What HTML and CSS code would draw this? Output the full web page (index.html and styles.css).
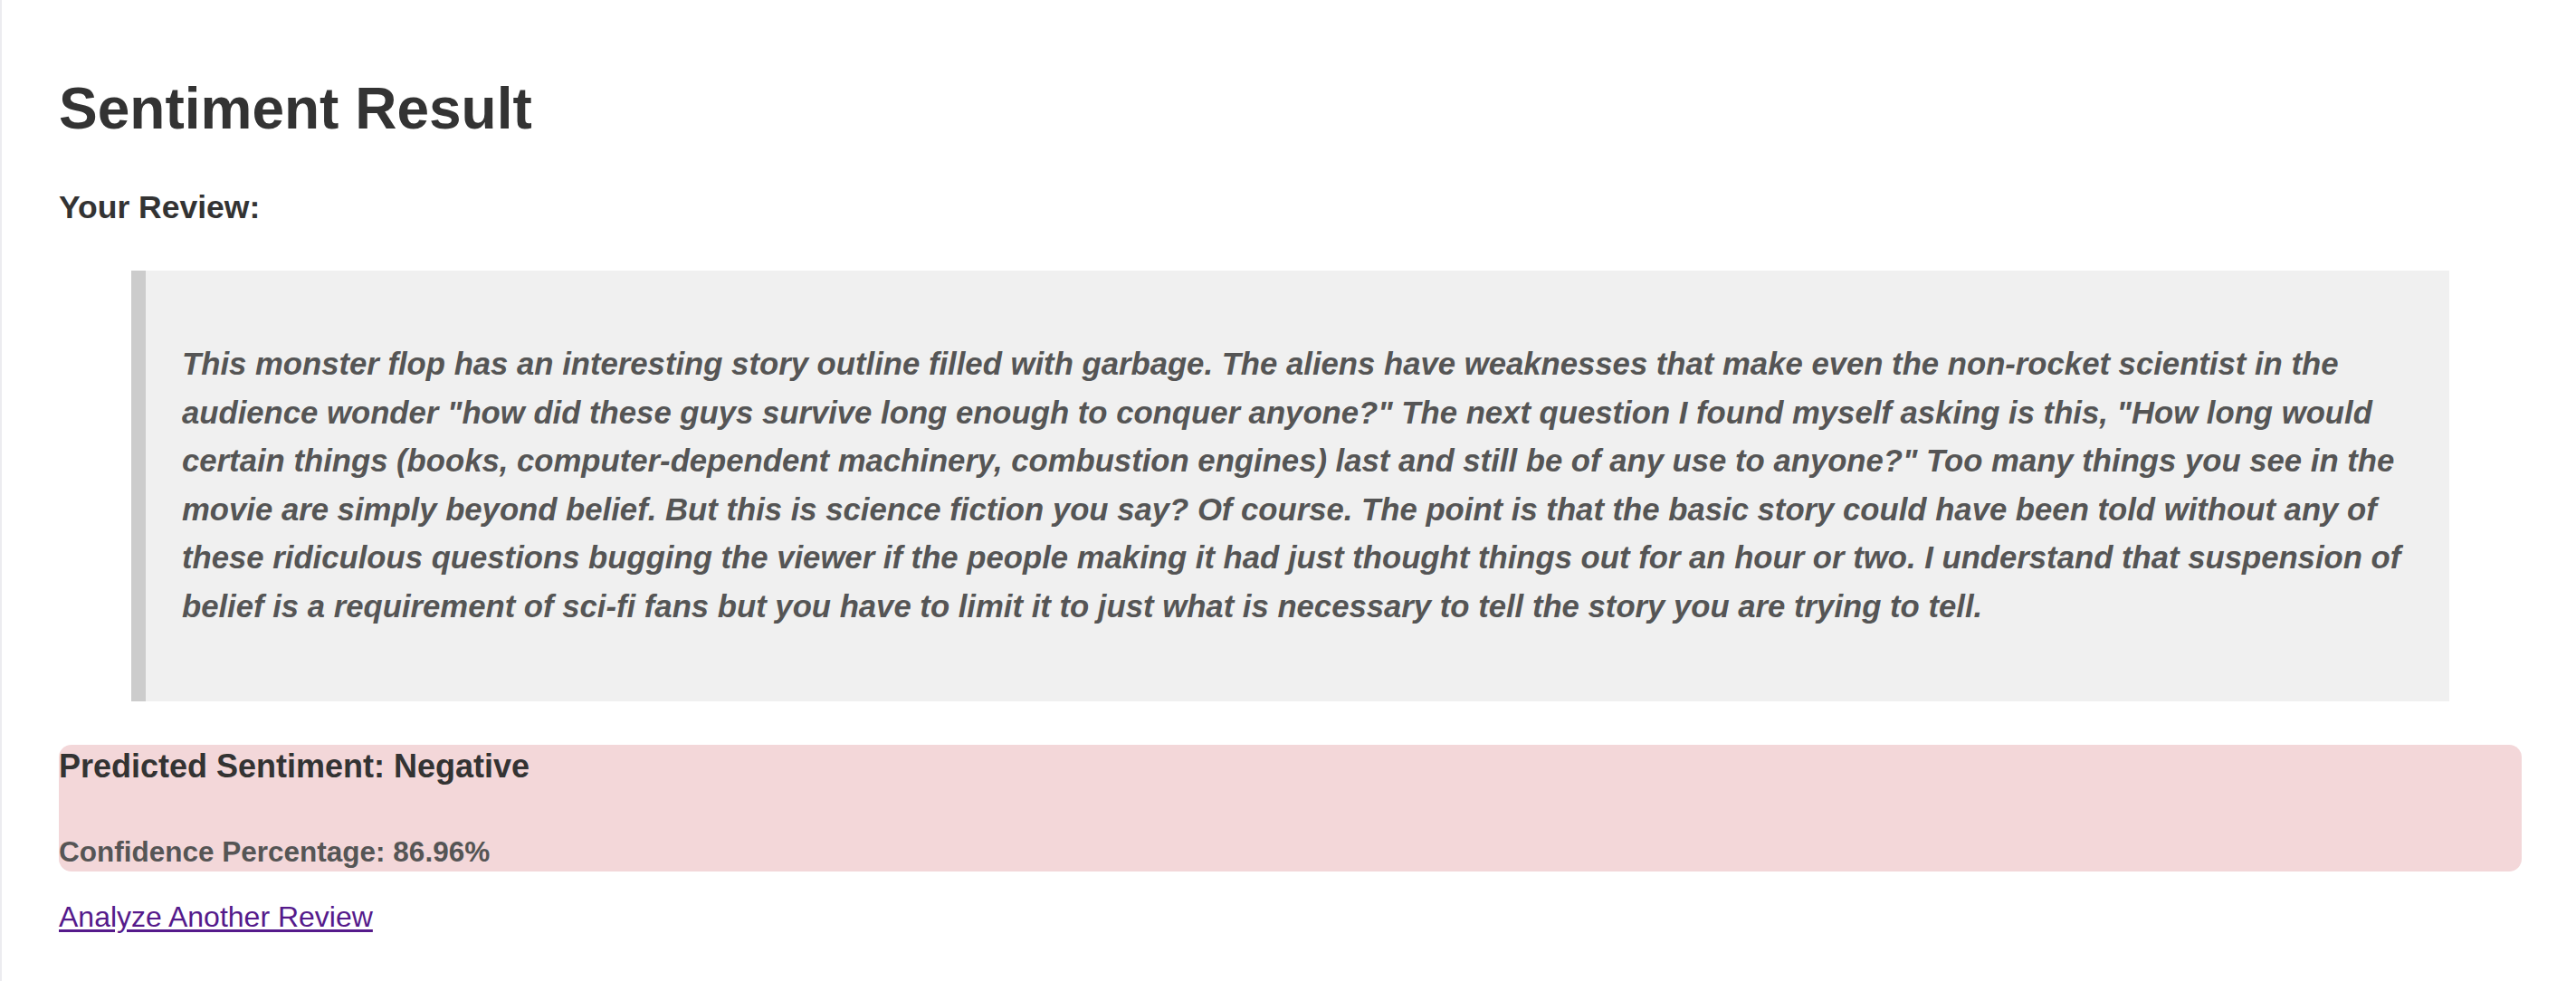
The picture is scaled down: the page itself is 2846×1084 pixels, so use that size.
FILE: index.html
```html
<!DOCTYPE html>
<html lang="en">
<head>
<meta charset="utf-8">
<title>Sentiment Result</title>
<link rel="stylesheet" href="styles.css">
</head>
<body>
<main class="page">
  <h1 class="title">Sentiment Result</h1>
  <p class="label">Your Review:</p>
  <blockquote class="review">
    <p class="review-text">This monster flop has an interesting story outline filled with garbage. The aliens have weaknesses that make even the non-rocket scientist in the audience wonder "how did these guys survive long enough to conquer anyone?" The next question I found myself asking is this, "How long would certain things (books, computer-dependent machinery, combustion engines) last and still be of any use to anyone?" Too many things you see in the movie are simply beyond belief. But this is science fiction you say? Of course. The point is that the basic story could have been told without any of these ridiculous questions bugging the viewer if the people making it had just thought things out for an hour or two. I understand that suspension of belief is a requirement of sci-fi fans but you have to limit it to just what is necessary to tell the story you are trying to tell.</p>
  </blockquote>
  <section class="result">
    <h3 class="result-title">Predicted Sentiment: Negative</h3>
    <p class="confidence">Confidence Percentage: 86.96%</p>
  </section>
  <a class="back-link" href="#">Analyze Another Review</a>
</main>
</body>
</html>
```

FILE: styles.css
```css
html, body {
  margin: 0;
  padding: 0;
  background: #ffffff;
}

body {
  font-family: "Liberation Sans", Arial, Helvetica, sans-serif;
  color: #333333;
  border-left: 2px solid #ececf0;
  min-height: 100vh;
  box-sizing: border-box;
}

.page {
  padding: 83px 60px 0 63px;
}

.title {
  margin: 0;
  font-size: 64px;
  line-height: 74px;
  font-weight: 700;
  color: #333333;
}

.label {
  margin: 51px 0 0;
  font-size: 35.5px;
  line-height: 42px;
  font-weight: 700;
  color: #333333;
}

.review {
  margin: 49px 80px 0;
  padding: 40px 20px 40px 40px;
  background: #f0f0f0;
  border-left: 16px solid #cccccc;
}

.review-text {
  margin: 37px 0;
  font-size: 34.7px;
  line-height: 53.6px;
  font-style: italic;
  font-weight: 700;
  color: #555555;
}

.result {
  margin-top: 48px;
  background: #f3d7d9;
  border-radius: 14px;
  display: flow-root;
}

.result-title {
  margin: 0;
  font-size: 36px;
  line-height: 47px;
  font-weight: 700;
  color: #333333;
}

.confidence {
  margin: 49px 0 0;
  font-size: 31.5px;
  line-height: 44px;
  font-weight: 700;
  color: #555555;
}

.back-link {
  display: inline-block;
  margin-top: 32px;
  font-size: 32px;
  line-height: 37px;
  color: #551a8b;
  text-decoration: underline;
  text-underline-offset: 3px;
}
```
